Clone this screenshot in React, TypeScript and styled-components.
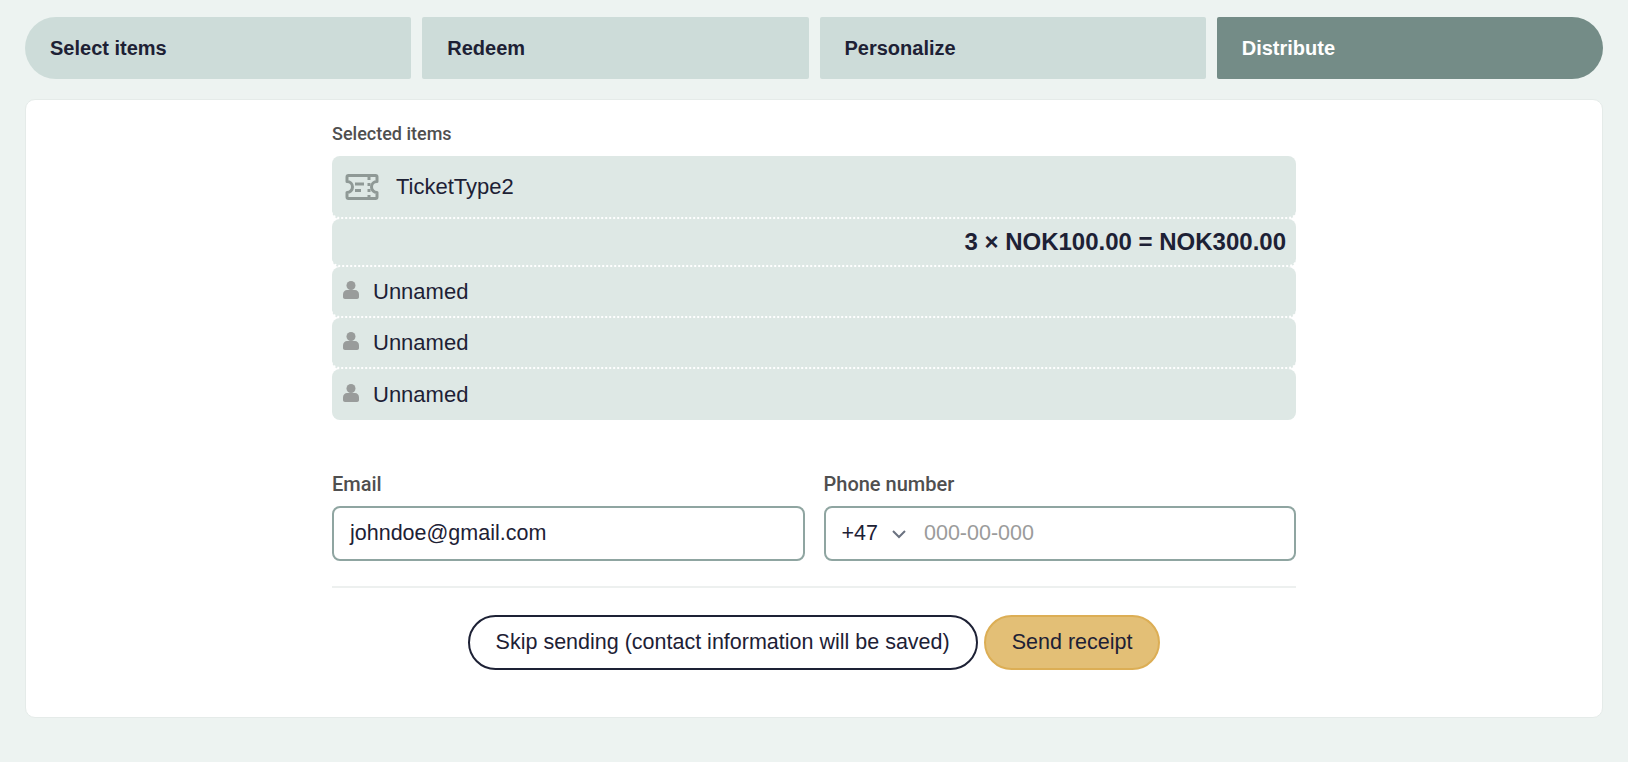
import React from "react";
import styled, { createGlobalStyle } from "styled-components";

const GlobalStyle = createGlobalStyle`
  * {
    box-sizing: border-box;
  }
  body {
    margin: 0;
    background-color: #edf3f1;
    font-family: "Liberation Sans", Arial, sans-serif;
    color: #1d2135;
  }
`;

const steps = ["Select items", "Redeem", "Personalize", "Distribute"];

const TicketIcon = () => (
  <svg width="34" height="28" viewBox="0 0 34 28" fill="none">
    <path
      d="M3.5 2.5H30.5a1.5 1.5 0 0 1 1.5 1.5V8.5a5.500 5.500 0 0 0 0 11V24a1.500 1.500 0 0 1-1.500 1.500H3.500A1.500 1.500 0 0 1 2 24V19.500a5.500 5.500 0 0 0 0-11V4a1.500 1.500 0 0 1 1.500-1.500Z"
      stroke="#8f9996"
      strokeWidth="3"
      strokeLinejoin="round"
    />
    <path
      d="M10 11h9M10 17.500h6M24 4v3M24 10v3M24 16v3M24 22v2"
      stroke="#8f9996"
      strokeWidth="3"
    />
  </svg>
);

const PersonIcon = () => (
  <svg width="16" height="18" viewBox="0 0 16 18" fill="#999c9b">
    <circle cx="8" cy="4.500" r="4.500" />
    <path d="M0 13.500C0 10.500 2 9 4 9h8c2 0 4 1.500 4 4.500V16c0 1-.8 2-2 2H2c-1.200 0-2-1-2-2Z" />
  </svg>
);

const ChevronIcon = () => (
  <svg width="16" height="16" viewBox="0 0 16 16" fill="none">
    <path d="M2 5l6 6 6-6" stroke="#6b7280" strokeWidth="2" />
  </svg>
);

export default function App() {
  return (
    <>
      <GlobalStyle />
      <Page>
        <StepBar>
          {steps.map((step) => (
            <Step key={step} active={step === "Distribute"}>
              {step}
            </Step>
          ))}
        </StepBar>
        <Card>
          <Content>
            <SectionLabel>Selected items</SectionLabel>
            <ItemList>
              <TicketRow>
                <TicketIcon />
                TicketType2
              </TicketRow>
              <PriceRow>3 × NOK100.00 = NOK300.00</PriceRow>
              {[0, 1, 2].map((i) => (
                <PersonRow key={i}>
                  <PersonIconWrap>
                    <PersonIcon />
                  </PersonIconWrap>
                  Unnamed
                </PersonRow>
              ))}
            </ItemList>
            <FieldGrid>
              <Field>
                <FieldLabel>Email</FieldLabel>
                <InputBox>johndoe@gmail.com</InputBox>
              </Field>
              <Field>
                <FieldLabel>Phone number</FieldLabel>
                <InputBox>
                  <DialCode>+47</DialCode>
                  <ChevronIcon />
                  <Placeholder>000-00-000</Placeholder>
                </InputBox>
              </Field>
            </FieldGrid>
            <Divider />
            <Actions>
              <OutlineButton>
                Skip sending (contact information will be saved)
              </OutlineButton>
              <PrimaryButton>Send receipt</PrimaryButton>
            </Actions>
          </Content>
        </Card>
      </Page>
    </>
  );
}

const Page = styled.div`
  min-height: 762px;
  padding: 17px 25px 0 25px;
`;

const StepBar = styled.div`
  display: grid;
  grid-template-columns: repeat(4, 1fr);
  gap: 11px;
  height: 62px;
`;

const Step = styled.div<{ active: boolean }>`
  display: flex;
  align-items: center;
  padding-left: 25px;
  font-size: 20px;
  font-weight: 700;
  border-radius: 2px;
  background-color: ${({ active }) => (active ? "#748c87" : "#cddcd9")};
  color: ${({ active }) => (active ? "#ffffff" : "#1d2135")};

  &:first-child {
    border-radius: 31px 2px 2px 31px;
  }
  &:last-child {
    border-radius: 2px 31px 31px 2px;
  }
`;

const Card = styled.div`
  margin-top: 20px;
  height: 619px;
  background-color: #ffffff;
  border: 1px solid #e5ebe9;
  border-radius: 10px;
  padding-top: 22px;
`;

const Content = styled.div`
  width: 964px;
  margin: 0 auto;
`;

const SectionLabel = styled.div`
  font-family: Roboto, sans-serif;
  font-size: 18px;
  font-weight: 500;
  line-height: 24px;
  color: #4f4f4f;
  margin-bottom: 10px;
`;

const ItemList = styled.div`
  display: flex;
  flex-direction: column;
`;

const Row = styled.div`
  display: flex;
  align-items: center;
  background-color: #dee8e5;
  border-radius: 8px;
  border-bottom: 2px dotted #ffffff;
  font-size: 22px;

  &:last-child {
    border-bottom: none;
  }
`;

const TicketRow = styled(Row)`
  height: 63px;
  padding-left: 13px;
  gap: 17px;
`;

const PriceRow = styled(Row)`
  height: 48px;
  justify-content: flex-end;
  padding-right: 10px;
  font-size: 24px;
  font-weight: 700;
`;

const PersonRow = styled(Row)`
  height: 51px;
  padding-left: 11px;
  gap: 14px;
`;

const PersonIconWrap = styled.span`
  display: flex;
  margin-top: -4px;
`;

const FieldGrid = styled.div`
  display: grid;
  grid-template-columns: 1fr 1fr;
  gap: 19px;
  margin-top: 50px;
`;

const Field = styled.div`
  display: flex;
  flex-direction: column;
`;

const FieldLabel = styled.div`
  font-family: Roboto, sans-serif;
  font-size: 20px;
  font-weight: 500;
  line-height: 28px;
  color: #4f4f4f;
  margin-bottom: 8px;
`;

const InputBox = styled.div`
  display: flex;
  align-items: center;
  height: 55px;
  padding: 0 16px;
  border: 2px solid #8fa5a1;
  border-radius: 8px;
  font-size: 21.5px;
`;

const DialCode = styled.span`
  margin-right: 13px;
`;

const Placeholder = styled.span`
  margin-left: 17px;
  color: #9b9b9b;
`;

const Divider = styled.div`
  height: 2px;
  margin-top: 25px;
  background-color: #edf0ef;
`;

const Actions = styled.div`
  display: flex;
  justify-content: center;
  gap: 6px;
  margin-top: 27px;
`;

const PillButton = styled.button`
  height: 55px;
  padding: 0 26px;
  border-radius: 28px;
  font-family: inherit;
  font-size: 21.5px;
  color: #1d2135;
`;

const OutlineButton = styled(PillButton)`
  background-color: #ffffff;
  border: 2px solid #1d2135;
`;

const PrimaryButton = styled(PillButton)`
  background-color: #e3bf76;
  border: 2px solid #dcae55;
`;
